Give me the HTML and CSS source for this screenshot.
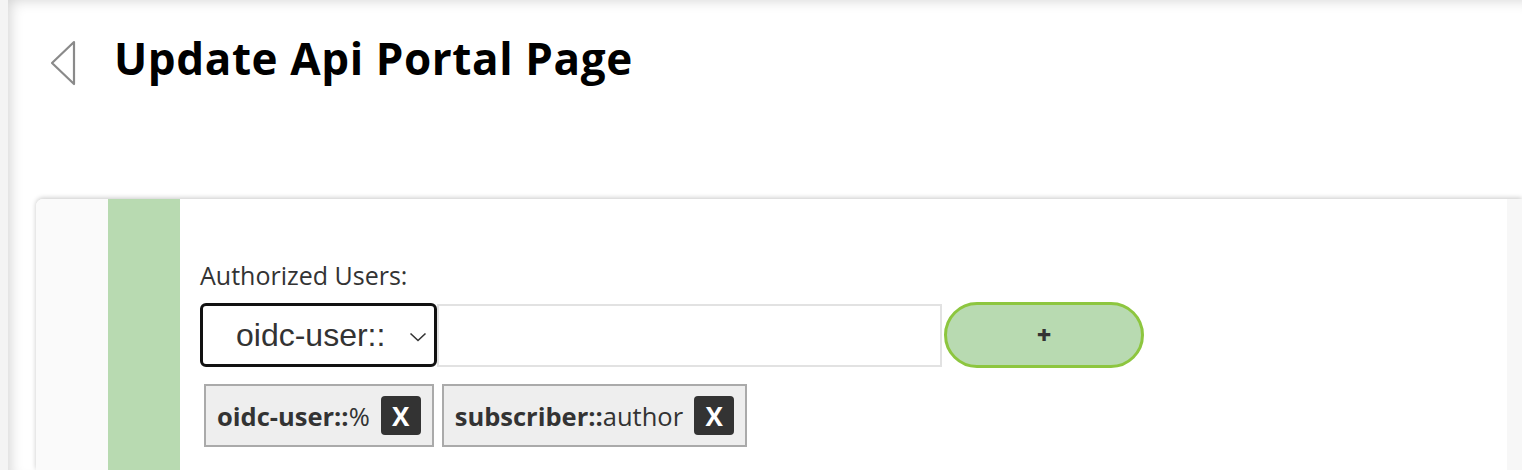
FILE: index.html
```html
<!DOCTYPE html>
<html lang="en">
<head>
<meta charset="utf-8">
<title>Update Api Portal Page</title>
<link rel="stylesheet" href="styles.css">
</head>
<body>
<div class="app">
  <div class="rail"></div>
  <main class="main">
    <header class="header">
      <a class="back" href="#" aria-label="Back">
        <svg width="26" height="46" viewBox="0 0 26 46"><path d="M24 2 L2 23 L24 44 Z" fill="none" stroke="#8a8a8a" stroke-width="2.2" stroke-linejoin="round"/></svg>
      </a>
      <h1 class="title">Update Api Portal Page</h1>
    </header>
    <section class="card">
      <div class="col-gutter"></div>
      <div class="col-accent"></div>
      <div class="col-body">
        <label class="field-label" for="user-type">Authorized Users:</label>
        <div class="add-row">
          <div class="select-wrap">
            <select id="user-type" class="select">
              <option>oidc-user::</option>
              <option>subscriber::</option>
            </select>
            <svg class="select-chev" width="18" height="10" viewBox="0 0 18 10"><path d="M1.5 1.5 L9 8.5 L16.5 1.5" fill="none" stroke="#333" stroke-width="1.6"/></svg>
          </div>
          <input class="text-input" type="text" aria-label="User">
          <button class="add-btn" type="button">+</button>
        </div>
        <div class="tags">
          <span class="tag"><span class="tag-text"><b>oidc-user::</b>%</span><button class="tag-x" type="button">X</button></span>
          <span class="tag"><span class="tag-text"><b>subscriber::</b>author</span><button class="tag-x" type="button">X</button></span>
        </div>
      </div>
      <div class="col-side"></div>
    </section>
  </main>
</div>
</body>
</html>
```

FILE: styles.css
```css
html, body {
  margin: 0;
  padding: 0;
  height: 100%;
}
body {
  background: #f4f4f4;
  font-family: "Open Sans", "Noto Sans", sans-serif;
  color: #333;
  overflow: hidden;
}
.app {
  display: flex;
  min-height: 100%;
}
.rail {
  width: 8px;
  flex: none;
  background: #f4f4f4;
}
.main {
  flex: 1;
  background: #fff;
  box-shadow: inset 8px 6px 14px -6px rgba(0, 0, 0, 0.18);
  display: flex;
  flex-direction: column;
  min-height: 470px;
}
.header {
  height: 199px;
  box-sizing: border-box;
  padding: 32px 0 0 42px;
  display: flex;
  align-items: flex-start;
}
.back {
  display: block;
  margin-top: 8px;
  width: 26px;
  height: 46px;
}
.back svg { display: block; }
.title {
  margin: 0 0 0 38px;
  font-size: 44px;
  line-height: 52px;
  font-weight: 700;
  color: #000;
  letter-spacing: 0.6px;
}
.card {
  flex: 1;
  margin-left: 28px;
  display: grid;
  grid-template-columns: 72px 72px 1fr 15px;
  border-top-left-radius: 7px;
  box-shadow: 0 -1px 5px rgba(0, 0, 0, 0.22);
  background: #fff;
  overflow: hidden;
}
.col-gutter { background: #fafafa; }
.col-accent { background: #b8dab1; }
.col-side { background: #f7f7f7; }
.col-body {
  background: #fff;
  padding: 61px 0 0 20px;
}
.field-label {
  display: block;
  font-size: 25px;
  line-height: 30px;
  color: #333;
}
.add-row {
  display: flex;
  align-items: center;
  margin-top: 12px;
}
.select-wrap {
  position: relative;
  width: 237px;
  height: 64px;
  flex: none;
}
.select {
  appearance: none;
  -webkit-appearance: none;
  width: 100%;
  height: 100%;
  box-sizing: border-box;
  border: 3px solid #111;
  border-radius: 6px;
  background: #fff;
  padding: 0 0 0 33px;
  font-family: "Liberation Sans", Arial, sans-serif;
  font-size: 32px;
  color: #333;
  outline: none;
}
.select-chev {
  position: absolute;
  right: 10px;
  top: 29px;
  pointer-events: none;
}
.text-input {
  width: 505px;
  height: 63px;
  box-sizing: border-box;
  border: 2px solid #e2e2e2;
  background: #fff;
  margin: 0;
  padding: 0 10px;
  font-size: 20px;
  outline: none;
  flex: none;
}
.add-btn {
  margin-left: 2px;
  width: 200px;
  height: 66px;
  box-sizing: border-box;
  border: 3px solid #8dc63f;
  border-radius: 33px;
  background: #b8dab1;
  font-family: "Open Sans", sans-serif;
  font-size: 25px;
  font-weight: 800;
  color: #333;
  padding: 0 0 2px;
  cursor: pointer;
}
.tags {
  display: flex;
  gap: 8px;
  margin: 16px 0 0 4px;
}
.tag {
  display: inline-flex;
  align-items: center;
  height: 63px;
  box-sizing: border-box;
  border: 2px solid #aaa;
  background: #eee;
  padding: 0 11px 0 11px;
  font-size: 25.5px;
  color: #333;
}
.tag-text b { font-weight: 700; }
.tag-x {
  margin-left: 11px;
  width: 40px;
  height: 39px;
  border: none;
  border-radius: 4px;
  background: #333;
  color: #fff;
  font-family: "Open Sans", sans-serif;
  font-size: 26px;
  font-weight: 700;
  padding: 0;
  cursor: pointer;
}
```
